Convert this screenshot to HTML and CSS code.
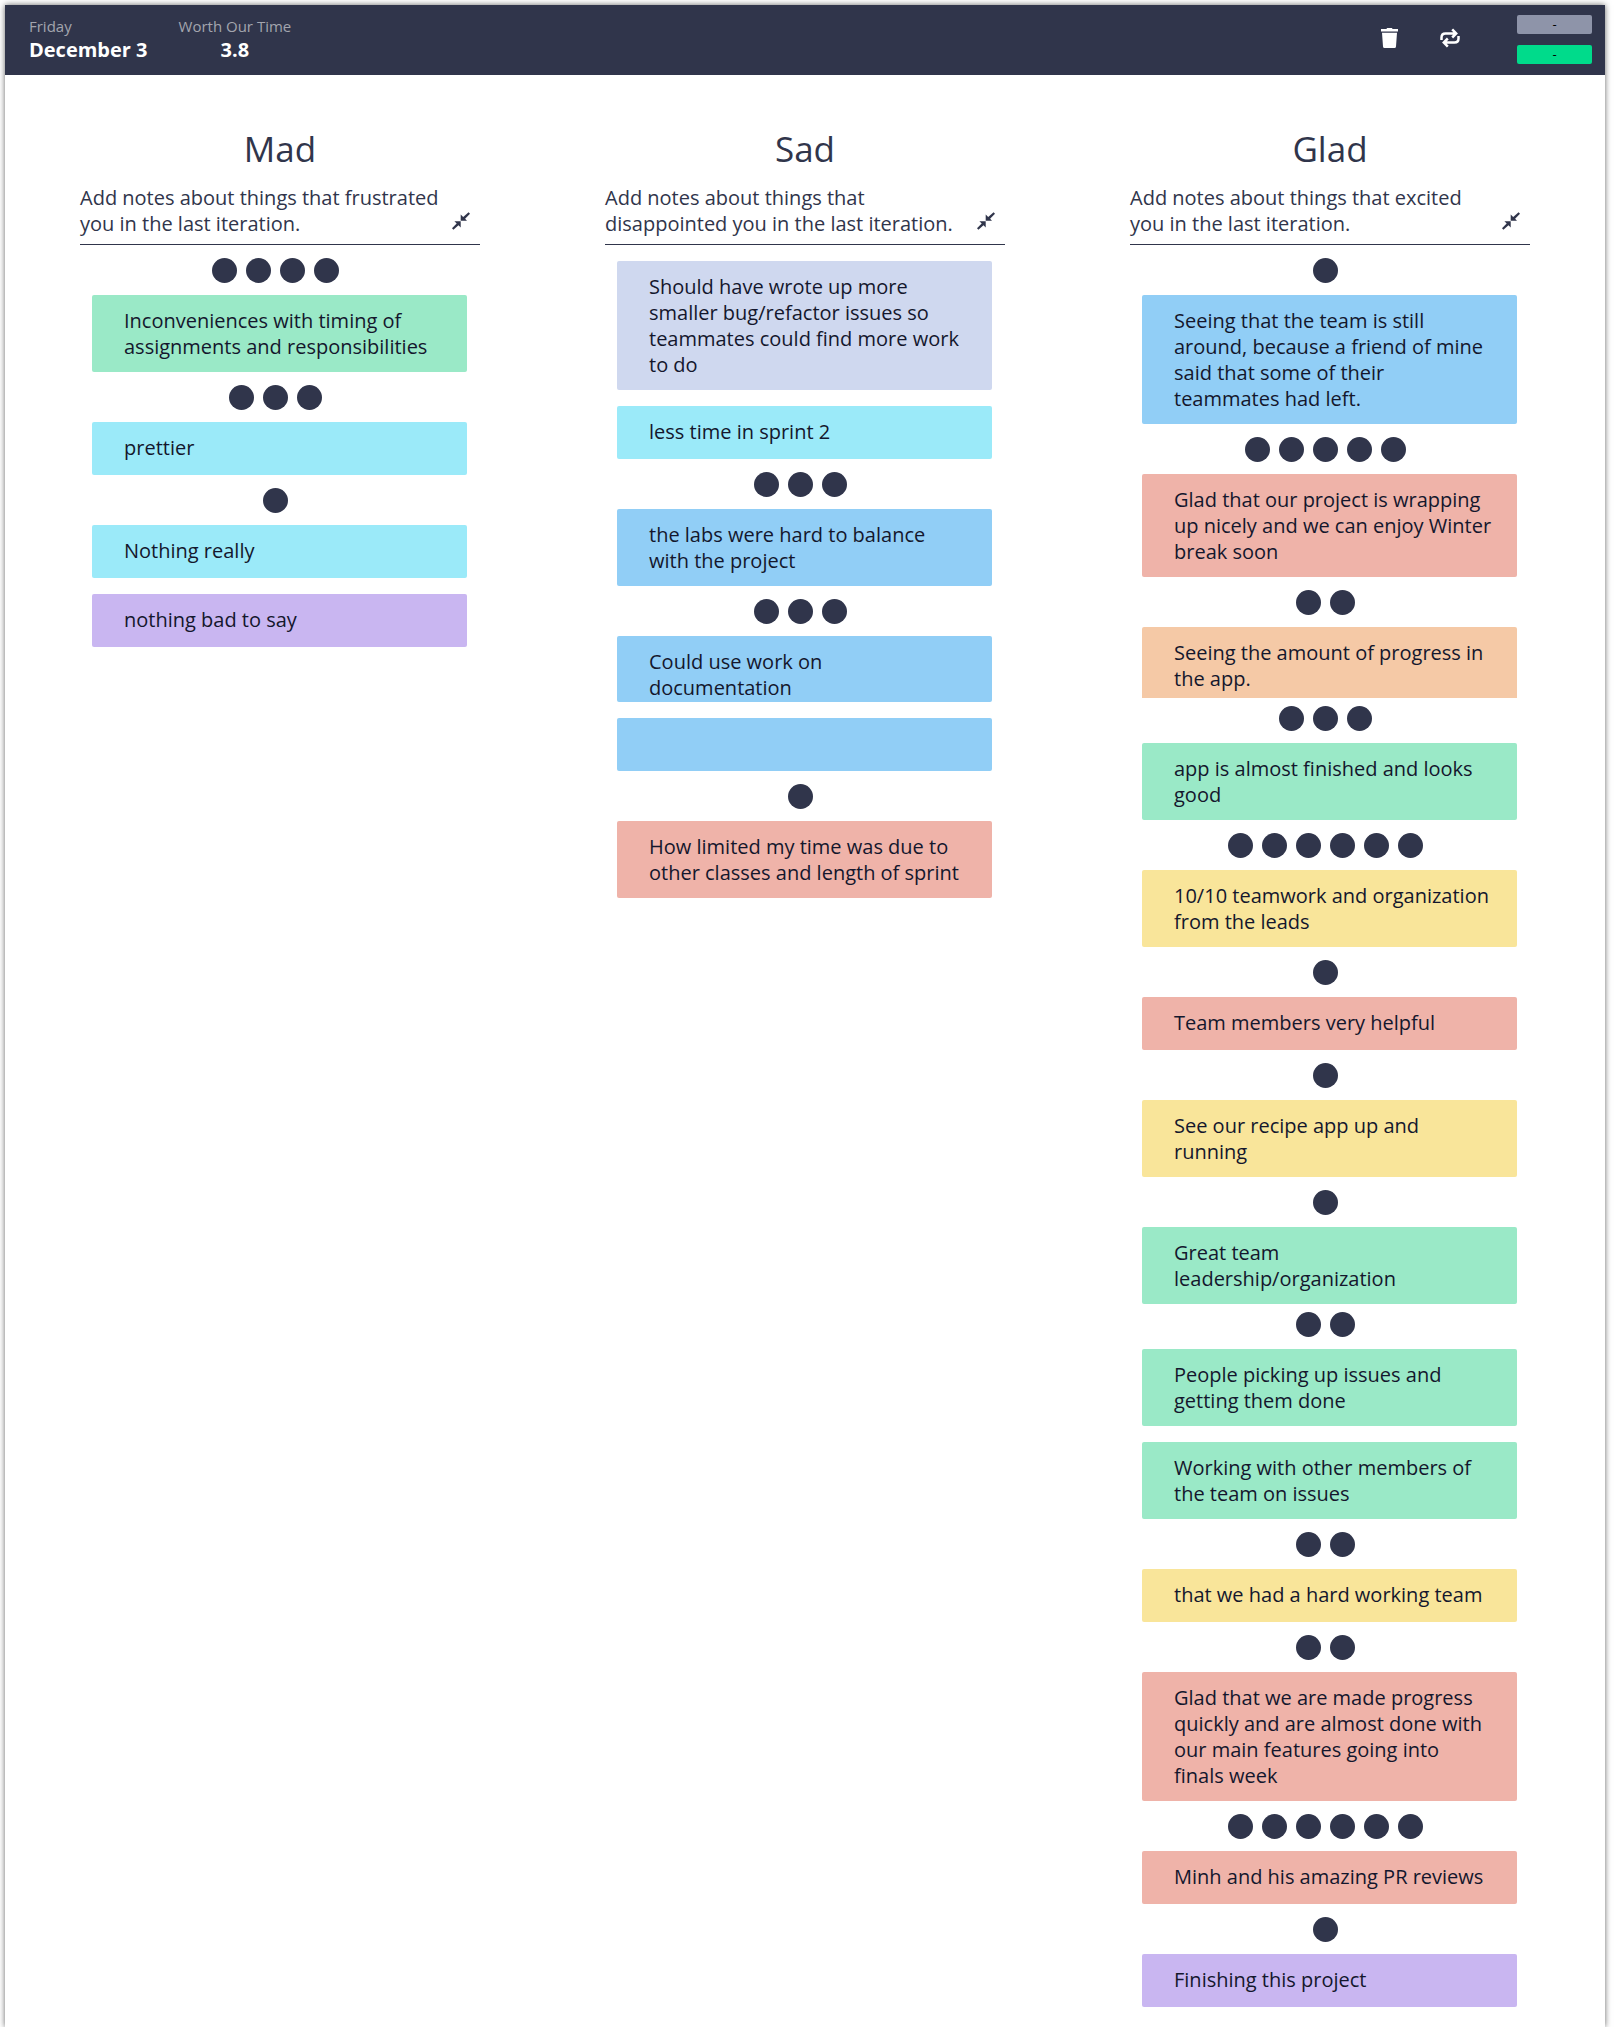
FILE: index.html
```
<!DOCTYPE html>
<html lang="en">
<head>
<meta charset="utf-8">
<meta name="viewport" content="width=device-width, initial-scale=1">
<title>Retrospective – December 3</title>
<link rel="stylesheet" href="styles.css">
</head>
<body>
<svg class="sprite" aria-hidden="true">
  <symbol id="icon-compress" viewBox="0 0 18 18">
    <path d="M8.700 2.600V8.700H15L13.100 6.800L18 1.700L16.600 .3L11.200 5.100Z M8.700 15.400V9.200H2.400L4.700 11.500L0 16.300L1.400 17.700L6.500 13.200Z"/>
  </symbol>
</svg>
<div class="sheet">
  <header class="topbar">
    <div class="stat">
      <span class="stat-label">Friday</span>
      <strong class="stat-value">December 3</strong>
    </div>
    <div class="stat stat-centered">
      <span class="stat-label">Worth Our Time</span>
      <strong class="stat-value">3.8</strong>
    </div>
    <div class="actions">
      <button class="icon-button" type="button" aria-label="Delete">
        <svg width="20" height="20" viewBox="0 0 20 20"><path d="M1 1H6.500L7 0H12L12.500 1H18V3.500H1Z M2 4.800H17L16 18.500Q15.900 20 14.500 20H4.500Q3.100 20 3 18.500Z"/></svg>
      </button>
      <button class="icon-button" type="button" aria-label="Repeat">
        <svg width="20" height="20" viewBox="0 0 20 20"><path class="loop-line" d="M1.500 12V9.500Q1.500 5.500 5.500 5.500H15.500 M18.500 8V10.500Q18.500 14.500 14.500 14.500H4.500 M12.200 1.300L16.200 5.500L12.200 9.500 M7.800 10.500L3.800 14.500L7.800 18.700"/></svg>
      </button>
      <div class="votes">
        <button class="vote vote-muted" type="button">-</button>
        <button class="vote vote-active" type="button">-</button>
      </div>
    </div>
  </header>
  <main class="board">
    <section class="column">
      <h2 class="title">Mad</h2>
      <div class="intro">
        <p class="prompt">Add notes about things that frustrated you in the last iteration.</p>
        <button class="collapse" type="button" aria-label="Collapse Mad"><svg width="18" height="18"><use href="#icon-compress"/></svg></button>
      </div>
      <div class="dots"><i></i><i></i><i></i><i></i></div>
      <article class="note green">Inconveniences with timing of assignments and responsibilities</article>
      <div class="dots"><i></i><i></i><i></i></div>
      <article class="note cyan">prettier</article>
      <div class="dots"><i></i></div>
      <article class="note cyan">Nothing really</article>
      <article class="note purple">nothing bad to say</article>
    </section>
    <section class="column">
      <h2 class="title">Sad</h2>
      <div class="intro">
        <p class="prompt">Add notes about things that disappointed you in the last iteration.</p>
        <button class="collapse" type="button" aria-label="Collapse Sad"><svg width="18" height="18"><use href="#icon-compress"/></svg></button>
      </div>
      <article class="note lavender">Should have wrote up more smaller bug/refactor issues so teammates could find more work to do</article>
      <article class="note cyan">less time in sprint 2</article>
      <div class="dots"><i></i><i></i><i></i></div>
      <article class="note blue">the labs were hard to balance with the project</article>
      <div class="dots"><i></i><i></i><i></i></div>
      <article class="note blue tight">Could use work on documentation</article>
      <article class="note blue"></article>
      <div class="dots"><i></i></div>
      <article class="note red">How limited my time was due to other classes and length of sprint</article>
    </section>
    <section class="column">
      <h2 class="title">Glad</h2>
      <div class="intro">
        <p class="prompt">Add notes about things that excited you in the last iteration.</p>
        <button class="collapse" type="button" aria-label="Collapse Glad"><svg width="18" height="18"><use href="#icon-compress"/></svg></button>
      </div>
      <div class="dots"><i></i></div>
      <article class="note blue">Seeing that the team is still around, because a friend of mine said that some of their teammates had left.</article>
      <div class="dots"><i></i><i></i><i></i><i></i><i></i></div>
      <article class="note red">Glad that our project is wrapping up nicely and we can enjoy Winter break soon</article>
      <div class="dots"><i></i><i></i></div>
      <article class="note orange cut">Seeing the amount of progress in the app.</article>
      <div class="dots dots-near"><i></i><i></i><i></i></div>
      <article class="note green">app is almost finished and looks good</article>
      <div class="dots"><i></i><i></i><i></i><i></i><i></i><i></i></div>
      <article class="note yellow">10/10 teamwork and organization from the leads</article>
      <div class="dots"><i></i></div>
      <article class="note red">Team members very helpful</article>
      <div class="dots"><i></i></div>
      <article class="note yellow">See our recipe app up and running</article>
      <div class="dots"><i></i></div>
      <article class="note green">Great team leadership/organization</article>
      <div class="dots dots-near"><i></i><i></i></div>
      <article class="note green">People picking up issues and getting them done</article>
      <article class="note green">Working with other members of the team on issues</article>
      <div class="dots"><i></i><i></i></div>
      <article class="note yellow">that we had a hard working team</article>
      <div class="dots"><i></i><i></i></div>
      <article class="note red">Glad that we are made progress quickly and are almost done with our main features going into finals week</article>
      <div class="dots"><i></i><i></i><i></i><i></i><i></i><i></i></div>
      <article class="note red">Minh and his amazing PR reviews</article>
      <div class="dots"><i></i></div>
      <article class="note purple">Finishing this project</article>
    </section>
  </main>
</div>
</body>
</html>
```
FILE: styles.css
```
:root {
  --ink: #30354b;
}

* {
  box-sizing: border-box;
}

body {
  margin: 0;
  padding: 5px 10px 0 5px;
  background: #fff;
  color: var(--ink);
  font-family: "Open Sans", "Noto Sans", sans-serif;
  font-size: 20px;
  font-weight: 400;
  line-height: 26px;
}

button {
  padding: 0;
  border: 0;
  background: none;
  color: inherit;
  font: inherit;
  cursor: pointer;
}

.sprite {
  display: none;
}

.sheet {
  min-height: calc(100vh - 5px);
  background: #fff;
  box-shadow: 0 0 6px rgba(0, 0, 0, 0.6);
}

.topbar {
  display: flex;
  align-items: center;
  gap: 31px;
  height: 70px;
  padding: 0 13px 2px 24px;
  background: var(--ink);
  color: #fff;
}

.stat {
  display: flex;
  flex-direction: column;
}

.stat-centered {
  align-items: center;
}

.stat-label {
  color: #a3a5ae;
  font-size: 15px;
  line-height: 22px;
}

.stat-value {
  font-size: 20px;
  font-weight: 700;
  line-height: 26px;
}

.actions {
  display: flex;
  align-items: center;
  gap: 40px;
  margin-left: auto;
}

.icon-button {
  height: 20px;
  margin-bottom: 2px;
}

.icon-button svg,
.collapse svg {
  display: block;
  fill: currentColor;
}

.icon-button .loop-line {
  fill: none;
  stroke: currentColor;
  stroke-width: 2.5;
}

.votes {
  display: flex;
  flex-direction: column;
  gap: 11px;
  margin-left: 17px;
}

.vote {
  width: 75px;
  height: 19px;
  border-radius: 2px;
  color: #000;
  font-size: 13px;
  line-height: 19px;
}

.vote-muted {
  background: #8e94a9;
}

.vote-active {
  background: #00db8b;
}

.board {
  display: grid;
  grid-template-columns: repeat(3, minmax(0, 1fr));
  gap: 125px;
  padding: 50px 75px 20px;
}

.title {
  margin: 0 0 12px;
  font-size: 35px;
  font-weight: 400;
  line-height: 48px;
  text-align: center;
}

.intro {
  display: flex;
  align-items: flex-end;
  justify-content: space-between;
  gap: 12px;
  padding-bottom: 7px;
  border-bottom: 1px solid var(--ink);
}

.prompt {
  margin: 0;
}

.collapse {
  flex: none;
  margin: 0 10px 7px 0;
}

.dots {
  display: flex;
  justify-content: center;
  margin: 13px 0 12px;
}

.dots-near {
  margin-top: 8px;
}

.dots i {
  width: 25px;
  height: 25px;
  margin-right: 9px;
  border-radius: 50%;
  background: var(--ink);
}

.note {
  min-height: 53px;
  margin: 0 13px 0 12px;
  padding: 13px 24px 12px 32px;
  border-radius: 2px;
  color: #14172d;
}

.note + .note,
.intro + .note {
  margin-top: 16px;
}

.tight {
  padding-bottom: 1px;
}

.cut {
  padding-bottom: 6px;
  border-radius: 2px 2px 0 0;
}

.green { background: #9ae9c7; }
.cyan { background: #9beaf9; }
.purple { background: #c9b6f1; }
.lavender { background: #cfd8ef; }
.blue { background: #91cef6; }
.red { background: #efb3a9; }
.orange { background: #f5c9a6; }
.yellow { background: #f9e59a; }
```
